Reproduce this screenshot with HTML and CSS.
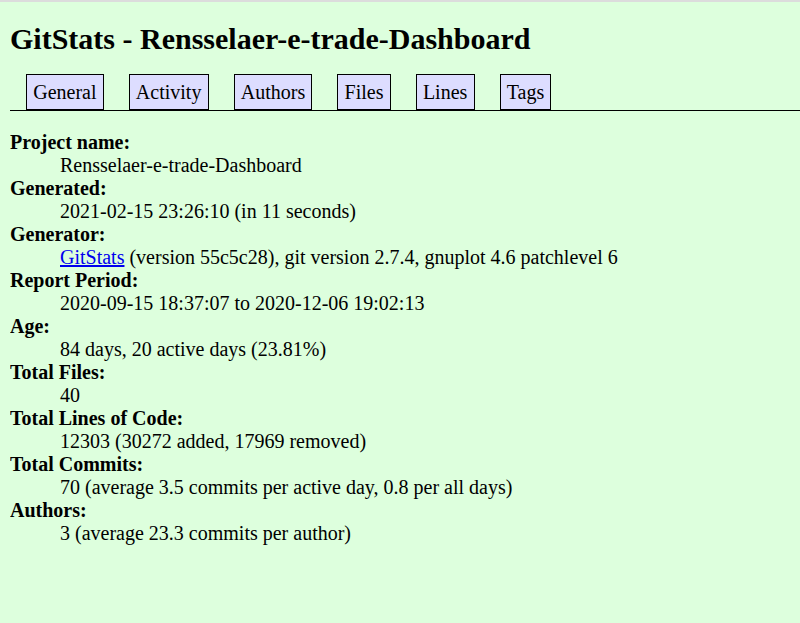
FILE: index.html
```html
<!DOCTYPE html>
<html>
<head>
<meta charset="utf-8">
<title>GitStats - Rensselaer-e-trade-Dashboard</title>
<link rel="stylesheet" href="styles.css">
</head>
<body>
<h1 class="title">GitStats - Rensselaer-e-trade-Dashboard</h1>
<div class="nav">
  <ul class="nav-list">
    <li class="nav-item"><a class="nav-link" href="#">General</a></li>
    <li class="nav-item"><a class="nav-link" href="#">Activity</a></li>
    <li class="nav-item"><a class="nav-link" href="#">Authors</a></li>
    <li class="nav-item"><a class="nav-link" href="#">Files</a></li>
    <li class="nav-item"><a class="nav-link" href="#">Lines</a></li>
    <li class="nav-item"><a class="nav-link" href="#">Tags</a></li>
  </ul>
</div>
<dl class="info">
  <dt>Project name</dt><dd>Rensselaer-e-trade-Dashboard</dd>
  <dt>Generated</dt><dd>2021-02-15 23:26:10 (in 11 seconds)</dd>
  <dt>Generator</dt><dd><a class="link" href="#">GitStats</a> (version 55c5c28), git version 2.7.4, gnuplot 4.6 patchlevel 6</dd>
  <dt>Report Period</dt><dd>2020-09-15 18:37:07 to 2020-12-06 19:02:13</dd>
  <dt>Age</dt><dd>84 days, 20 active days (23.81%)</dd>
  <dt>Total Files</dt><dd>40</dd>
  <dt>Total Lines of Code</dt><dd>12303 (30272 added, 17969 removed)</dd>
  <dt>Total Commits</dt><dd>70 (average 3.5 commits per active day, 0.8 per all days)</dd>
  <dt>Authors</dt><dd>3 (average 23.3 commits per author)</dd>
</dl>
</body>
</html>
```
FILE: styles.css
```css
html {
  border-top: 2px solid #dcdcdc;
  background-color: #dfd;
}

body {
  margin: 0 0 0 10px;
  color: black;
  background-color: #dfd;
  font-family: "Liberation Serif", "Times New Roman", serif;
  font-size: 20px;
  line-height: 23px;
}

.title {
  font-size: 30px;
  line-height: 37px;
  font-weight: bold;
  margin: 18px 0 17px;
}

.nav {
  border-bottom: 1px solid black;
  padding-left: 16px;
}

.nav-list {
  list-style: none;
  margin: 0;
  padding: 0;
  display: flex;
  gap: 25px;
}

.nav-item {
  background-color: #ddf;
  border: 1px solid black;
  padding: 6px 6.2px 5px;
}

.nav-link {
  color: black;
  text-decoration: none;
}

.info {
  margin: 20px 10px 20px 0;
}

.info dt {
  font-weight: bold;
}

.info dt::after {
  content: ':';
}

.info dd {
  margin-left: 50px;
}

.link {
  color: #0000ee;
  text-decoration: underline;
}
```
